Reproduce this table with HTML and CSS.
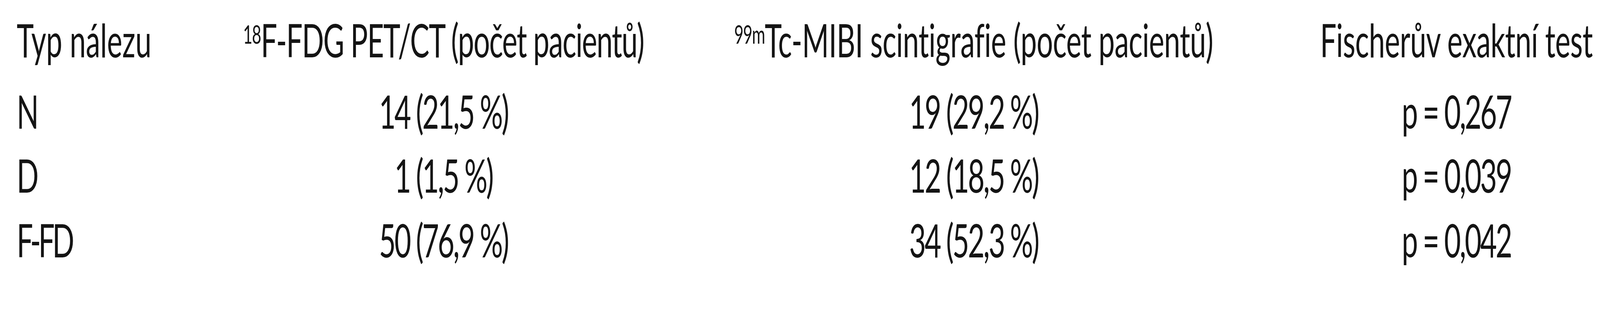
FILE: index.html
```html
<!DOCTYPE html>
<html lang="cs">
<head>
<meta charset="utf-8">
<title>Typ nálezu</title>
<link rel="stylesheet" href="styles.css">
</head>
<body>
<div class="table">
  <div class="cell head first"><span class="t">Typ nálezu</span></div>
  <div class="cell head"><span class="t h2"><sup>18</sup>F-FDG PET/CT (počet pacientů)</span></div>
  <div class="cell head"><span class="t h3"><sup>99m</sup>Tc-MIBI scintigrafie (počet pacientů)</span></div>
  <div class="cell head"><span class="t h4">Fischerův exaktní test</span></div>

  <div class="cell first"><span class="t">N</span></div>
  <div class="cell"><span class="t num">14 (21,5 %)</span></div>
  <div class="cell"><span class="t num">19 (29,2 %)</span></div>
  <div class="cell"><span class="t num">p = 0,267</span></div>

  <div class="cell first"><span class="t">D</span></div>
  <div class="cell"><span class="t num">1 (1,5 %)</span></div>
  <div class="cell"><span class="t num">12 (18,5 %)</span></div>
  <div class="cell"><span class="t num">p = 0,039</span></div>

  <div class="cell first"><span class="t ffd">F-FD</span></div>
  <div class="cell"><span class="t num">50 (76,9 %)</span></div>
  <div class="cell"><span class="t num">34 (52,3 %)</span></div>
  <div class="cell"><span class="t num">p = 0,042</span></div>
</div>
<script src="script.js"></script>
</body>
</html>
```

FILE: styles.css
```css
html, body {
  margin: 0;
  padding: 0;
  background: #ffffff;
}

body {
  height: 800px;
  overflow: hidden;
  color: #141414;
  font-family: Lato, "Open Sans", "Liberation Sans", sans-serif;
}

/* The table is designed on a 6530px-wide canvas. script.js sets --sx to
   (window width / 6530): the table is zoomed to fit the window width and
   stretched back vertically so it keeps its full 800px height. */
.table {
  display: grid;
  grid-template-columns: 1030px 1560px 2768px 1172px;
  width: 6530px;
  zoom: var(--sx, 1);
  transform: scaleY(calc(1 / var(--sx, 1)));
  transform-origin: 0 0;
}

.cell {
  display: flex;
  justify-content: center;
  white-space: nowrap;
  font-size: 118px;
  line-height: 165px;
}

.cell.first {
  justify-content: flex-start;
  padding-left: 68px;
}

.head {
  padding-top: 19px;
  padding-bottom: 18px;
}

.h2 {
  letter-spacing: -2.6px;
}

.h3,
.h4 {
  letter-spacing: -0.8px;
}

.num {
  letter-spacing: -5.5px;
}

.ffd {
  letter-spacing: -10px;
}

sup {
  font-size: 66px;
  line-height: 0;
  vertical-align: 35px;
  letter-spacing: -2px;
}
```

FILE: script.js
```js
(function () {
  var sx = Math.min(1, window.innerWidth / 6530);
  document.documentElement.style.setProperty('--sx', String(sx));
})();
```
